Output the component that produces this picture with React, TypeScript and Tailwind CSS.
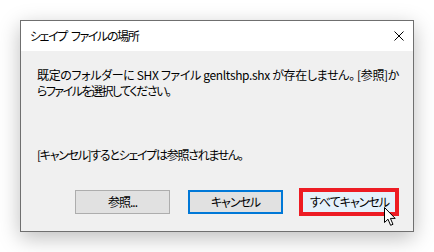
import type { ReactNode } from "react";

const font =
  "font-['Noto_Sans_CJK_JP','Noto_Sans',sans-serif] [font-feature-settings:'palt']";

type ButtonProps = {
  children: ReactNode;
  variant?: "normal" | "default" | "hover";
};

function DialogButton({ children, variant = "normal" }: ButtonProps) {
  const look =
    variant === "default"
      ? "border-2 border-[#0078d7] bg-[#e1e1e1]"
      : variant === "hover"
        ? "border border-[#0078d7] bg-[#e5f1fb]"
        : "border border-[#adadad] bg-[#e1e1e1]";
  return (
    <button
      type="button"
      className={`flex h-[24px] w-[95px] items-center justify-center text-[12px] leading-none tracking-[-1px] text-black ${look}`}
    >
      {children}
    </button>
  );
}

export default function App() {
  return (
    <div className={`h-[252px] w-[434px] bg-white pl-[20px] pt-[20px] ${font}`}>
      <div className="flex h-[212px] w-[394px] flex-col border border-[#6f6f6f] bg-white shadow-[0_6px_20px_rgba(0,0,0,0.26)]">
        {/* title bar */}
        <div className="flex h-[30px] shrink-0 items-center justify-between bg-white pl-[9px] pr-[9px]">
          <span className="flex gap-[4px] text-[12px] leading-none tracking-[-1.4px] text-black">
            <span>シェイプ</span>
            <span>ファイルの場所</span>
          </span>
          <svg viewBox="0 0 10 10" className="h-[10px] w-[10px]" aria-hidden="true">
            <path d="M0.5 0.5L9.5 9.5M9.5 0.5L0.5 9.5" stroke="#000" strokeWidth="1" />
          </svg>
        </div>
        {/* body */}
        <div className="relative flex flex-1 flex-col bg-[#f0f0f0] pl-[16px] pt-[16px] text-[12px] leading-[16px] text-black">
          <p className="whitespace-nowrap tracking-[-0.35px]">
            既定のフォルダーに SHX ファイル genltshp.shx が存在しません。 [参照]か
          </p>
          <p className="whitespace-nowrap tracking-[-1.5px]">らファイルを選択してください。</p>
          <p className="mt-[48px] whitespace-nowrap tracking-[-1.3px]">
            [キャンセル]するとシェイプは参照されません。
          </p>
          <div className="mt-[27px] flex gap-[18px] pl-[38px]">
            <DialogButton>参照...</DialogButton>
            <DialogButton variant="default">キャンセル</DialogButton>
            <div className="relative ml-[1px]">
              <DialogButton variant="hover">すべてキャンセル</DialogButton>
              <div className="pointer-events-none absolute -left-[3px] -top-[2px] h-[28px] w-[100px] border-[4px] border-[#ed1c24]" />
              <svg
                viewBox="0 0 13 20"
                className="pointer-events-none absolute left-[82px] top-[17px] h-[20px] w-[13px]"
                aria-hidden="true"
              >
                <path
                  d="M0.5 0.5V15.5L4 12.2L6.6 18.3L9 17.3L6.4 11.4H11.2Z"
                  fill="#fff"
                  stroke="#000"
                  strokeWidth="1"
                  strokeLinejoin="miter"
                />
              </svg>
            </div>
          </div>
        </div>
      </div>
    </div>
  );
}
